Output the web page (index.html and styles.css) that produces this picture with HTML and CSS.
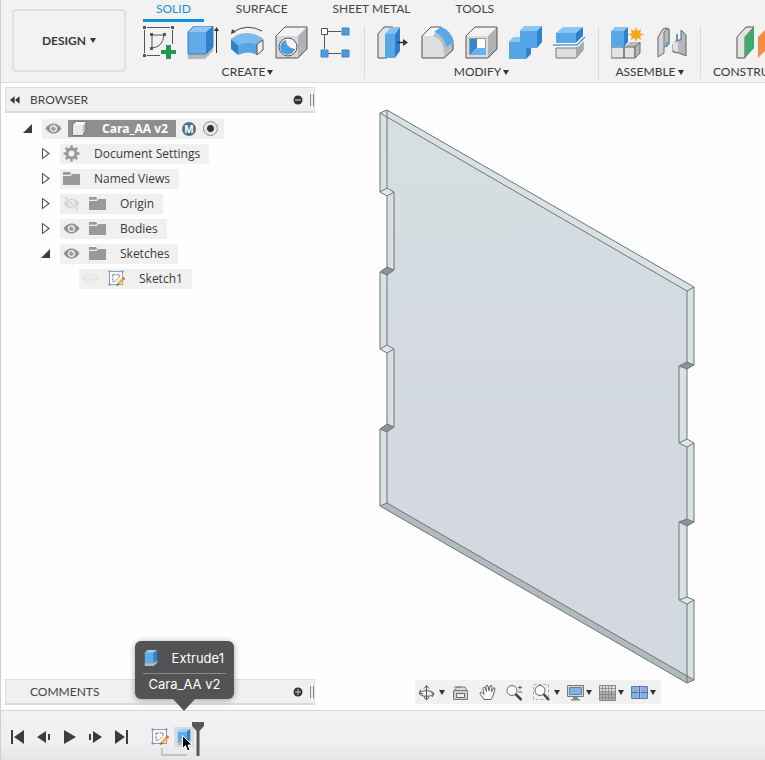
FILE: index.html
```html
<!DOCTYPE html>
<html lang="en">
  <head>
    <meta charset="utf-8">
    <title>Cara_AA v2</title>
    <link rel="stylesheet" href="styles.css">
  </head>
  <body>
    <!-- shared icons -->
    <svg class="defs" width="0" height="0" aria-hidden="true">
      <symbol id="eye" viewBox="0 0 17 17">
        <path d="M0.5 8.5Q4 3.5 8.5 3.5T16.500 8.500Q13 13.500 8.500 13.500T0.500 8.500Z" fill="#919193"/>
        <circle cx="8.500" cy="8.500" r="3.600" fill="#f0f0f1"/>
        <circle cx="8.500" cy="8.500" r="2.200" fill="#919193"/>
        <circle cx="9.200" cy="7.800" r="0.800" fill="#f0f0f1"/>
      </symbol>
      <symbol id="folder" viewBox="0 0 17 17">
        <path d="M0 2h7l1.500 2H17v11H0z" fill="#99999b"/>
        <path d="M0 5.300h7.500l1.500-1.500" fill="none" stroke="#f0f0f1" stroke-width="1.200"/>
      </symbol>
      <symbol id="sketch" viewBox="0 0 18 18">
        <rect x="1.500" y="1.500" width="14" height="14" fill="#f7f9fb" stroke="#8e9ba8"/>
        <path d="M5 5h7.500q-1 6-7.500 7.500z" fill="none" stroke="#7c858e" stroke-dasharray="3 1"/>
        <path d="M0.500 0.500h2v2h-2zM14.500 0.500h2v2h-2zM0.500 14.500h2v2h-2z" fill="#5a9bd4"/>
        <path d="M9.500 16l1-3 5-5 2 2-5 5z" fill="#f5b53c"/>
        <path d="M14.800 8.700l1.400-1.400 2 2-1.400 1.400z" fill="#e2574c"/>
        <path d="M9 17l1-3 1.700 1.800z" fill="#5b5b5b"/>
      </symbol>
      <symbol id="extrude" viewBox="0 0 18 20">
        <path d="M2 16v3h10l4-4v-3z" fill="#b9babc"/>
        <path d="M2 4v12h10V4z" fill="#5dade9"/>
        <path d="M2 4l3-3h11l-4 3z" fill="#9bd0f5"/>
        <path d="M12 4l4-3v12l-4 3z" fill="#2f80c8"/>
      </symbol>
    </svg>

    <header class="toolbar">
      <button class="workspace caret">DESIGN</button>
      <div class="ribbon">
        <nav class="tabs">
          <a class="tab active" href="#solid">SOLID</a>
          <a class="tab" href="#surface">SURFACE</a>
          <a class="tab" href="#sheet-metal">SHEET METAL</a>
          <a class="tab" href="#tools">TOOLS</a>
        </nav>
        <div class="groups">
          <section class="group">
            <div class="tools">
              <button class="tool" aria-label="Create Sketch">
                <svg viewBox="0 0 33 33">
                  <path d="M1.500 4v23M4 1.500h23M29.500 4v14M4 29.500h13" fill="none" stroke="#555"/>
                  <path d="M9 9h12q-1 12-12 13z" fill="none" stroke="#555"/>
                  <path d="M0 0h3v3H0zM28 0h3v3h-3zM0 28h3v3H0zM7 7h3v3H7zM20 7h3v3h-3zM7 21h3v3H7z" fill="#555"/>
                  <path d="M23 19h5v5h5v4h-5v5h-5v-5h-5v-4h5z" fill="#20994f"/>
                </svg>
              </button>
              <button class="tool" aria-label="Extrude">
                <svg viewBox="0 0 33 33">
                  <path d="M1 28v5h17l8-8v-5z" fill="#b6b7b9"/>
                  <path d="M1 6h18v22H1z" fill="#60abe8"/>
                  <path d="M1 6l6-6h19l-7 6z" fill="#8fc6f2"/>
                  <path d="M19 6l7-6v21l-7 7z" fill="#2f81cb"/>
                  <path d="M1 28V6l6-6h19v21l-7 7z" fill="none" stroke="#377fba"/>
                  <path d="M29.500 27V3" stroke="#333"/>
                  <path d="M27 5l2.500-4 2.500 4z" fill="#333"/>
                </svg>
              </button>
              <button class="tool" aria-label="Revolve">
                <svg viewBox="0 0 33 33">
                  <path d="M2 6Q16-3 31 5" fill="none" stroke="#444"/>
                  <path d="M0 8l1-5 4 3z" fill="#444"/>
                  <path d="M0 13l6-4q10-4 20 0l7 4-7 5q-9-4-19 1z" fill="#79bbee"/>
                  <path d="M0 13l7 6v10l-7-6z" fill="#2f81cb"/>
                  <path d="M7 19q9-5 19-1v11q-9-5-19 0z" fill="#58a5e3"/>
                  <path d="M26 18l6-4v10l-6 5z" fill="#eee" stroke="#555"/>
                </svg>
              </button>
              <button class="tool" aria-label="Hole">
                <svg viewBox="0 0 33 33">
                  <path d="M1 10h22v22H1z" fill="#d9d9db"/>
                  <path d="M1 10l9-9h22l-9 9z" fill="#f3f3f4"/>
                  <path d="M23 10l9-9v22l-9 9z" fill="#b1b2b5"/>
                  <path d="M1 32V10l9-9h22v22l-9 9z" fill="none" stroke="#555"/>
                  <circle cx="13" cy="21" r="9" fill="#f4f4f4" stroke="#555"/>
                  <path d="M11 14q0 8 9 9a7.500 7.500 0 1 1-9-9z" fill="#4a9ee0"/>
                </svg>
              </button>
              <button class="tool" aria-label="Pattern">
                <svg viewBox="0 0 33 33">
                  <path d="M5.500 9v14M9 5.500h13M9 27.500h13" stroke="#555"/>
                  <path d="M2.500 2.500h6v6h-6z" fill="#fff" stroke="#555"/>
                  <path d="M23 2h7v7h-7zM2 24h7v7H2zM23 24h7v7h-7z" fill="#4a9ce0" stroke="#3886c8"/>
                </svg>
              </button>
            </div>
            <button class="menu caret">CREATE</button>
          </section>
          <section class="group">
            <div class="tools">
              <button class="tool" aria-label="Press Pull">
                <svg viewBox="0 0 33 33">
                  <path d="M1 32V8l6-7h9l-6 7v24z" fill="#e5e5e6" stroke="#555"/>
                  <path d="M8 8l6-7h9l-5 7z" fill="#83c1f0"/>
                  <path d="M8 8h10v24H8z" fill="#58a7e7"/>
                  <path d="M18 8l5-7v24l-5 7z" fill="#2c7fc9"/>
                  <path d="M20 16.500h8" stroke="#333" stroke-width="1.500"/>
                  <path d="M26 13l5 3.500-5 3.500z" fill="#333"/>
                </svg>
              </button>
              <button class="tool" aria-label="Fillet">
                <svg viewBox="0 0 33 33">
                  <path d="M1 32V10l9-9h10q9 3 12 16v7l-9 8z" fill="#bcbdc0"/>
                  <path d="M1 10h10q11 2 12 16v6H1z" fill="#dededf"/>
                  <path d="M1 10l9-9h9l-7 9z" fill="#f5f5f5"/>
                  <path d="M13 6l7-5q10 3 13 15l-8 5q-2-12-12-15z" fill="#5aa9e7"/>
                  <path d="M20 1H10l-9 9v22h22l9-8v-7" fill="none" stroke="#555"/>
                </svg>
              </button>
              <button class="tool" aria-label="Shell">
                <svg viewBox="0 0 33 33">
                  <path d="M1 10h22v22H1z" fill="#dcdcde"/>
                  <path d="M1 10l9-9h22l-9 9z" fill="#f3f3f4"/>
                  <path d="M23 10l9-9v22l-9 9z" fill="#b1b2b5"/>
                  <path d="M1 32V10l9-9h22v22l-9 9z" fill="none" stroke="#555"/>
                  <path d="M4.500 12.500h16v16h-16z" fill="#fff" stroke="#999"/>
                  <path d="M5 13h7v9l-7 7z" fill="#3286ce"/>
                  <path d="M5 29l7-7h9v7z" fill="#66b2ed"/>
                </svg>
              </button>
              <button class="tool" aria-label="Combine">
                <svg viewBox="0 0 33 33">
                  <path d="M0 33V16l5-5h6V5l5-5h17v16l-5 6h-6v6l-5 5z" fill="#2f82cc"/>
                  <path d="M0 16h11V5h17v17H17v11H0z" fill="#56a5e6"/>
                  <path d="M0 16l5-5h6v5zM11 5l5-5h17l-5 5z" fill="#8bc5f1"/>
                </svg>
              </button>
              <button class="tool" aria-label="Split Body">
                <svg viewBox="0 0 33 33">
                  <path d="M3 7h20v10H3z" fill="#58a7e7"/>
                  <path d="M3 7l7-6h20l-7 6z" fill="#8bc5f1"/>
                  <path d="M23 7l7-6v9l-7 7z" fill="#2f80c9"/>
                  <path d="M3 22h20l7-6v8l-7 8H3z" fill="#dededf" stroke="#777"/>
                  <path d="M23 22v10l7-8v-8z" fill="#aaabae"/>
                  <path d="M1 19h23l8-8" fill="none" stroke="#fff" stroke-width="4"/>
                  <path d="M0 19h24l8-8" fill="none" stroke="#4ba1df" stroke-width="1.500"/>
                </svg>
              </button>
            </div>
            <button class="menu caret">MODIFY</button>
          </section>
          <section class="group">
            <div class="tools">
              <button class="tool" aria-label="New Component">
                <svg viewBox="0 0 33 33">
                  <path d="M14 21l5-5h10v10l-6 6z" fill="#b8b9bb"/>
                  <path d="M0 21h13v11H0zM13 21h11v11H13z" fill="#e2e2e3" stroke="#666"/>
                  <path d="M24 21l5-5v11l-5 5z" fill="#b8b9bb" stroke="#666"/>
                  <path d="M0 5h13v16H0z" fill="#58a7e7"/>
                  <path d="M0 5l4-4h13l-4 4z" fill="#8bc5f1"/>
                  <path d="M13 5l4-4v15l-4 5z" fill="#2f80c9"/>
                  <path d="M25 1l1.500 4 4-2-1.500 4 4 1.500-4 1.500 1.500 4-4-2-1.500 4-1.500-4-4 2 1.500-4-4-1.500 4-1.500-1.500-4 4 2z" fill="#faa61a"/>
                </svg>
              </button>
              <button class="tool" aria-label="Joint">
                <svg viewBox="0 0 33 33">
                  <path d="M3 31V11l5-8q3-2 6 0v15l-5 3v6z" fill="#d2d3d5" stroke="#666"/>
                  <path d="M9 21V6q2-4 5-2v14z" fill="#b8babd" stroke="#777"/>
                  <path d="M12 16v5" stroke="#4aa0e4" stroke-width="2"/>
                  <path d="M31 30V9l-5-5v10h-4l-4 4v8l6 1z" fill="#b5b7ba" stroke="#666"/>
                  <path d="M18 15l5 2v9l-5-2z" fill="#e0e1e3"/>
                  <path d="M22 8v6" stroke="#4aa0e4" stroke-width="2"/>
                </svg>
              </button>
            </div>
            <button class="menu caret">ASSEMBLE</button>
          </section>
          <section class="group">
            <div class="tools">
              <button class="tool" aria-label="Offset Plane">
                <svg viewBox="0 0 33 33">
                  <path d="M1 32V11l9-10h8l-9 10v21z" fill="#e3e3e4" stroke="#555"/>
                  <path d="M9 11l9-10v21L9 32z" fill="#3dab70"/>
                  <path d="M22 11l10-10v21L22 32z" fill="#f28c48"/>
                </svg>
              </button>
            </div>
            <button class="menu caret">CONSTRUCT</button>
          </section>
        </div>
      </div>
    </header>

    <main class="canvas">
      <aside class="side">
        <div class="panel-bar">
          <button class="collapse" aria-label="Collapse">
            <svg viewBox="0 0 11 8"><path d="M5 0v8L0 4zM10.500 0v8L5.500 4z" fill="#333"/></svg>
          </button>
          <h2>BROWSER</h2>
          <button class="dot" aria-label="Hide">
            <svg viewBox="0 0 10 10"><circle cx="5" cy="5" r="4.500" fill="#333"/><path d="M2 5h6" stroke="#aaa" stroke-width="1.500"/></svg>
          </button>
          <span class="grip"></span>
        </div>

        <ul class="tree">
          <li class="root">
            <div class="row">
              <button class="arrow open" aria-label="Collapse Cara_AA v2"></button>
              <div class="item">
                <svg class="icon"><use href="#eye"/></svg>
                <span class="component">
                  <svg class="icon" viewBox="0 0 17 17">
                    <path d="M2 5l3-3h10v9l-3 4H2z" fill="#b9bac7" stroke="#65666f"/>
                    <path d="M2 5h10v10H2z" fill="#e7e7ef"/>
                    <path d="M2 5l3-3h10l-3 3z" fill="#f8f8fb"/>
                  </svg>
                  <span class="name">Cara_AA v2</span>
                </span>
                <span class="badge">M</span>
                <input type="radio" name="active" aria-label="Activate Cara_AA v2" checked>
              </div>
            </div>
            <ul>
              <li>
                <div class="row">
                  <button class="arrow" aria-label="Expand Document Settings"></button>
                  <div class="item">
                    <svg class="icon" viewBox="0 0 17 17">
                      <path d="M8.500 0.500v16M0.500 8.500h16M2.800 2.800l11.400 11.400M14.200 2.800L2.800 14.200" stroke="#98989a" stroke-width="2.600"/>
                      <circle cx="8.500" cy="8.500" r="4.500" fill="#f0f0f1" stroke="#98989a" stroke-width="3"/>
                    </svg>
                    <span class="name">Document Settings</span>
                  </div>
                </div>
              </li>
              <li>
                <div class="row">
                  <button class="arrow" aria-label="Expand Named Views"></button>
                  <div class="item">
                    <svg class="icon"><use href="#folder"/></svg>
                    <span class="name">Named Views</span>
                  </div>
                </div>
              </li>
              <li>
                <div class="row">
                  <button class="arrow" aria-label="Expand Origin"></button>
                  <div class="item">
                    <svg class="icon off" viewBox="0 0 17 17">
                      <use href="#eye"/>
                      <path d="M2 2l13 13" stroke="#f0f0f1" stroke-width="3"/>
                      <path d="M2 2l13 13" stroke="#919193" stroke-width="1.500"/>
                    </svg>
                    <svg class="icon"><use href="#folder"/></svg>
                    <span class="name">Origin</span>
                  </div>
                </div>
              </li>
              <li>
                <div class="row">
                  <button class="arrow" aria-label="Expand Bodies"></button>
                  <div class="item">
                    <svg class="icon"><use href="#eye"/></svg>
                    <svg class="icon"><use href="#folder"/></svg>
                    <span class="name">Bodies</span>
                  </div>
                </div>
              </li>
              <li>
                <div class="row">
                  <button class="arrow open" aria-label="Collapse Sketches"></button>
                  <div class="item">
                    <svg class="icon"><use href="#eye"/></svg>
                    <svg class="icon"><use href="#folder"/></svg>
                    <span class="name">Sketches</span>
                  </div>
                </div>
                <ul>
                  <li>
                    <div class="row">
                      <div class="item">
                        <svg class="icon faint"><use href="#eye"/></svg>
                        <svg class="icon"><use href="#sketch"/></svg>
                        <span class="name">Sketch1</span>
                      </div>
                    </div>
                  </li>
                </ul>
              </li>
            </ul>
          </li>
        </ul>

        <div class="panel-bar comments">
          <h2>COMMENTS</h2>
          <button class="dot" aria-label="Add comment">
            <svg viewBox="0 0 10 10"><circle cx="5" cy="5" r="4.500" fill="#333"/><path d="M2 5h6M5 2v6" stroke="#ccc"/></svg>
          </button>
          <span class="grip"></span>
        </div>
      </aside>

      <div class="viewport">
        <svg class="model" viewBox="315 83 450 627" role="img" aria-label="Extruded plate">
          <defs>
            <linearGradient id="glass" x1="0" y1="0" x2="0" y2="1">
              <stop offset="0" stop-color="#d6dfe1"/>
              <stop offset="0.500" stop-color="#d3d9e0"/>
              <stop offset="1" stop-color="#d3dade"/>
            </linearGradient>
          </defs>
          <!-- plate silhouette -->
          <path d="M380 113L387 110L694 287V365L687 369V439L694 443V522L687 526V597L694 600V680L687 683L380 506V429L387 425V353L380 349V272L387 268V196L380 192Z" fill="url(#glass)"/>
          <!-- thickness -->
          <g fill="#dae1e3">
            <path d="M380 113L387 110L694 287L687 291Z"/>
            <path d="M380 113L387 117V195L380 192ZM387 196L394 192V270L387 268ZM380 272L387 275V352L380 349ZM387 353L394 349V427L387 425ZM380 429L387 432V503L380 506Z"/>
            <path d="M687 291L694 287V365L687 369ZM679 366L687 369V440L679 443ZM687 447L694 443V522L687 526ZM679 522L687 526V597L679 600ZM687 604L694 600V680L687 683Z"/>
          </g>
          <path d="M380 506L387 503L694 680L687 683Z" fill="#b3b9bc"/>
          <g fill="#8b9397">
            <path d="M380 272L387 267L394 270L387 275ZM380 429L387 424L394 427L387 432Z"/>
            <path d="M679 366L687 362L694 365L687 369ZM679 522L687 519L694 522L687 526Z"/>
          </g>
          <g fill="#dfe8ea">
            <path d="M380 192L387 188L394 192L387 196ZM380 349L387 345L394 349L387 353Z"/>
            <path d="M679 443L687 439L694 443L687 447ZM679 600L687 597L694 600L687 604Z"/>
          </g>
          <g fill="none" stroke="#6b767b" stroke-linejoin="round">
            <path d="M380 113L387 110L694 287L687 291ZM380 506L387 503L694 680L687 683Z"/>
            <path d="M380 113V192L387 188L394 192V270L387 267L380 272V349L387 345L394 349V427L387 424L380 429V506"/>
            <path d="M387 110V188M380 192L387 196L394 192M387 196V267M380 272L387 275L394 270M387 275V345M380 349L387 353L394 349M387 353V424M380 429L387 432L394 427M387 432V503"/>
            <path d="M694 287V365L687 369L679 366V443L687 447L694 443V522L687 526L679 522V600L687 604L694 600V680"/>
            <path d="M687 291V362M679 366L687 362L694 365M687 369V439M679 443L687 439L694 443M687 447V519M679 522L687 519L694 522M687 526V597M679 600L687 597L694 600M687 604V683"/>
          </g>
        </svg>

        <div class="navbar">
          <div class="nav-group">
            <button class="caret" aria-label="Orbit">
              <svg viewBox="0 0 17 17">
                <g fill="none" stroke="#555"><ellipse cx="8.500" cy="9.500" rx="7" ry="2.800"/><path d="M8.500 2v13M6 4.500l2.500-3 2.500 3M6 13l2.500 3 2.500-3"/><path d="M3 5.500L1 9l4 1M14 13l2-3.500-3-1"/></g>
              </svg>
            </button>
            <button class="plain" aria-label="Look At">
              <svg viewBox="0 0 17 17">
                <path d="M2 7l3-4h8l2 4" fill="#ddd" stroke="#777"/>
                <path d="M1.500 6.500h14v9h-14z" fill="#cfcfd1" stroke="#777"/>
                <path d="M4.500 9.500h8v4h-8z" fill="#eee" stroke="#666"/>
                <path d="M2 3h7" stroke="#777"/>
              </svg>
            </button>
            <button class="plain" aria-label="Pan">
              <svg viewBox="0 0 17 17">
                <path d="M5 15.500L1 9.500q0-2 2-1l2 2-1-6q0-2 2-1l1.500 4L7 2q1-2 2 0l1 5 1-5q1-1.500 2 0l-.500 6 2-4q1.500-1 1.500 1l-2 7-2 3.500z" fill="#fafafa" stroke="#666"/>
              </svg>
            </button>
            <button class="plain" aria-label="Zoom">
              <svg viewBox="0 0 17 17">
                <circle cx="6" cy="6.500" r="5" fill="#fafafa" stroke="#666"/>
                <path d="M9.500 10l6 6" stroke="#444" stroke-width="2.500"/>
                <path d="M12 3.500h4M14 1.500v4M12 8h4" stroke="#666"/>
              </svg>
            </button>
            <button class="caret" aria-label="Fit">
              <svg viewBox="0 0 17 17">
                <path d="M0.500 0.500h15v15h-15z" fill="none" stroke="#aaa" stroke-dasharray="3 2"/>
                <circle cx="7" cy="6.500" r="5" fill="#fafafa" stroke="#666"/>
                <path d="M10.500 10l5.500 6" stroke="#444" stroke-width="2.500"/>
              </svg>
            </button>
          </div>
          <div class="nav-group display">
            <button class="caret" aria-label="Display Settings">
              <svg viewBox="0 0 17 17">
                <path d="M0.500 1.500h16v11h-16z" fill="#d4d5d7" stroke="#77797d"/>
                <path d="M2.500 3.500h12v7h-12z" fill="#85b1e4" stroke="#5f87b5"/>
                <path d="M6 13h5v2h2v1.500H4V15h2z" fill="#85878b"/>
              </svg>
            </button>
            <button class="caret" aria-label="Grid and Snaps">
              <svg viewBox="0 0 17 17">
                <path d="M0.500 1.500h16v15h-16z" fill="#dcdcdd" stroke="#888"/>
                <path d="M1 8h15v8H1z" fill="#adaeb0"/>
                <path d="M3.500 1v15M6.500 1v15M9.500 1v15M12.500 1v15M0 4.500h16M0 7.500h16M0 10.500h16M0 13.500h16" stroke="#808184" stroke-width="0.700"/>
              </svg>
            </button>
            <button class="caret" aria-label="Viewports">
              <svg viewBox="0 0 17 17">
                <path d="M0.500 2.500h16v12h-16z" fill="#86afdd" stroke="#5c7ea6"/>
                <path d="M8.500 2v13M1 8.500h15" stroke="#4c6c91"/>
                <path d="M7.300 3v11M9.700 3v11" stroke="#b7d2ef" stroke-width="0.600"/>
              </svg>
            </button>
          </div>
        </div>
      </div>
    </main>

    <footer class="timeline">
      <div class="playback">
        <button aria-label="Go to start"><svg viewBox="0 0 14 14"><path d="M0 0h2v14H0zM13 0v14L3 7z" fill="#3c3c3c"/></svg></button>
        <button aria-label="Step back"><svg viewBox="0 0 14 14"><path d="M9 1v12L0 7zM11 4h2v6h-2z" fill="#3c3c3c"/></svg></button>
        <button aria-label="Play"><svg viewBox="0 0 14 14"><path d="M1 0v14l12-7z" fill="#3c3c3c"/></svg></button>
        <button aria-label="Step forward"><svg viewBox="0 0 14 14"><path d="M4 1v12l9-6zM0 4h2v6H0z" fill="#3c3c3c"/></svg></button>
        <button aria-label="Go to end"><svg viewBox="0 0 14 14"><path d="M11 0h2v14h-2zM0 0v14l10-7z" fill="#3c3c3c"/></svg></button>
      </div>
      <div class="features">
        <button class="feature" aria-label="Sketch1"><svg><use href="#sketch"/></svg></button>
        <button class="feature hover" aria-label="Extrude1"><svg><use href="#extrude"/></svg></button>
        <span class="link"></span>
        <svg class="marker" viewBox="0 0 14 34"><path d="M1 0h12v4l-4.500 5V34h-3V9L1 4z" fill="#58585a"/></svg>
        <svg class="cursor" viewBox="0 0 11 17"><path d="M0.500 0.500v13l3-3 2 5.500 2.500-1-2-5h4z" fill="#000" stroke="#fff"/></svg>
        <div class="tooltip" role="tooltip">
          <div class="tip-title"><svg><use href="#extrude"/></svg>Extrude1</div>
          <div class="tip-doc">Cara_AA v2</div>
        </div>
      </div>
    </footer>
  </body>
</html>
```
FILE: styles.css
```css
* {
  box-sizing: border-box;
}

body {
  display: flex;
  flex-direction: column;
  min-height: 100vh;
  margin: 0;
  border-left: 1px solid #cfcfd0;
  overflow-x: hidden;
  background: #fefefe;
  color: #3a3a3a;
  font-family: Lato, sans-serif;
  font-size: 12px;
  line-height: 16px;
}

button {
  margin: 0;
  padding: 0;
  border: 0;
  background: none;
  color: inherit;
  font: inherit;
}

svg {
  display: block;
}

.defs {
  position: absolute;
}

ul {
  margin: 0;
  padding: 0;
  list-style: none;
}

.caret {
  display: flex;
  align-items: center;
}

.caret::after {
  content: "";
  margin-left: 4px;
  border: 3px solid transparent;
  border-top: 5px solid #333;
  border-bottom: 0;
}

.menu.caret::after {
  margin-left: 2px;
}

/* toolbar */

.toolbar {
  display: flex;
  height: 83px;
  border-bottom: 1px solid #dcdcdd;
  background: #f2f2f2;
  overflow: hidden;
}

.workspace {
  flex: none;
  justify-content: center;
  width: 114px;
  height: 63px;
  margin: 9px 17px 0 11px;
  border: 2px solid #e0e0e1;
  border-radius: 4px;
  font-weight: bold;
}

.ribbon {
  flex: none;
}

.tabs {
  display: flex;
  gap: 19px;
}

.tab {
  height: 22px;
  padding: 1px 13px 0;
  color: #444;
  text-decoration: none;
}

.tab.active {
  border-bottom: 3px solid #1190dc;
  color: #1190dc;
}

.groups {
  display: flex;
  margin-top: 4px;
}

.group {
  display: flex;
  flex-direction: column;
  align-items: center;
  gap: 5px;
  height: 53px;
  padding: 0 12px;
  border-left: 1px solid #dadadc;
}

.group:first-child {
  padding-left: 0;
  border-left: 0;
}

.tools {
  display: flex;
  gap: 11px;
}

.tool svg {
  width: 33px;
  height: 33px;
}

/* browser */

.canvas {
  display: flex;
  flex: 1;
}

.side {
  display: flex;
  flex: none;
  flex-direction: column;
  width: 314px;
  padding: 4px 0 5px 4px;
}

.panel-bar {
  display: flex;
  align-items: center;
  height: 26px;
  padding: 0 0 0 4px;
  border: 1px solid #dedee0;
  border-bottom: 2px solid #dadadb;
  background: #f0f0f1;
}

.panel-bar h2 {
  flex: 1;
  margin: 0;
  color: #444;
  font-size: 12px;
  font-weight: normal;
}

.collapse svg {
  width: 10px;
  height: 8px;
  margin-right: 10px;
}

.dot svg {
  width: 10px;
  height: 10px;
}

.grip {
  width: 4px;
  height: 12px;
  margin-left: 7px;
  border: 1px solid #888;
  border-width: 0 1px;
}

.comments {
  margin-top: auto;
  padding-left: 24px;
}

.tree {
  padding: 3px 0 0 17px;
  font-family: "Open Sans", sans-serif;
}

.tree ul {
  padding-left: 18px;
}

.row {
  display: flex;
  align-items: center;
  height: 25px;
}

.arrow {
  display: flex;
  align-items: center;
  width: 20px;
  height: 16px;
}

.arrow::before {
  content: "";
  width: 8px;
  height: 12px;
  margin-left: 2px;
  background: #555;
  clip-path: polygon(0 0, 100% 50%, 0 100%, 0 0, 1px 2px, 1px 10px, 6px 6px, 1px 2px);
}

.arrow.open::before {
  width: 9px;
  height: 9px;
  margin-left: 1px;
  background: #3c3c3c;
  clip-path: polygon(100% 0, 100% 100%, 0 100%);
}

.item {
  display: flex;
  align-items: center;
  gap: 9px;
  height: 20px;
  padding: 0 9px 0 3px;
  background: #f0f0f1;
}

.icon {
  width: 17px;
  height: 17px;
}

.icon.off {
  opacity: 0.3;
}

.icon.faint {
  opacity: 0.1;
}

.name {
  margin-left: 5px;
}

.root > .row .item {
  gap: 6px;
  padding-right: 6px;
}

.component {
  display: flex;
  align-items: center;
  gap: 9px;
  height: 17px;
  padding: 0 8px 0 3px;
  background: #8f8f91;
  color: #fff;
  font-weight: bold;
}

.badge {
  width: 14px;
  height: 14px;
  border-radius: 50%;
  background: #4d7388;
  color: #fff;
  font-size: 10px;
  font-weight: bold;
  line-height: 14px;
  text-align: center;
}

.item input {
  width: 15px;
  height: 15px;
  margin: 0 0 0 1px;
  border: 1px solid #8a8a90;
  border-radius: 50%;
  appearance: none;
  background: radial-gradient(circle, #333 3px, #e6e6ee 4px);
}

.tree ul ul {
  padding-left: 39px;
}

/* viewport */

.viewport {
  position: relative;
  flex: 1;
}

.model {
  position: absolute;
  width: 100%;
  height: 100%;
}

.navbar {
  position: absolute;
  bottom: 6px;
  left: 100px;
  display: flex;
  gap: 7px;
  height: 24px;
  padding: 0 5px 0 3px;
  background: #f1f1f2;
}

.nav-group {
  display: flex;
  gap: 7px;
}

.nav-group svg {
  width: 17px;
  height: 17px;
}

.plain {
  padding-right: 3px;
}

.display .caret::after {
  margin-left: 2px;
}

/* timeline */

.timeline {
  display: flex;
  align-items: center;
  height: 50px;
  padding: 2px 0 0 10px;
  border-top: 1px solid #d6d6d8;
  background: linear-gradient(#f2f2f4, #f0f0f2 60%, #e6e6e6);
}

.playback {
  display: flex;
  gap: 12px;
}

.playback svg {
  width: 14px;
  height: 14px;
}

.features {
  position: relative;
  display: flex;
  gap: 4px;
  margin-left: 21px;
}

.feature {
  padding: 1px;
}

.feature svg {
  width: 18px;
  height: 18px;
}

.feature.hover {
  background: #dcdcde;
}

.link {
  position: absolute;
  top: 21px;
  left: 11px;
  width: 26px;
  height: 8px;
  border: 2px solid #c3c3c5;
  border-width: 0 0 2px 2px;
}

.marker {
  position: absolute;
  top: -5px;
  left: 41px;
  width: 14px;
  height: 34px;
}

.cursor {
  position: absolute;
  top: 8px;
  left: 32px;
  width: 11px;
  height: 17px;
}

.tooltip {
  position: absolute;
  bottom: 48px;
  left: -15px;
  width: 99px;
  padding: 9px 8px 7px;
  border-radius: 6px;
  background: #535355;
  box-shadow: 0 1px 6px rgba(0, 0, 0, 0.35);
  color: #fff;
  font-family: Inter, sans-serif;
  font-size: 13px;
}

.tooltip::after {
  content: "";
  position: absolute;
  top: 100%;
  left: 38px;
  border: 11px solid transparent;
  border-top: 12px solid #535355;
  border-bottom: 0;
}

.tip-title {
  display: flex;
  justify-content: space-between;
  align-items: center;
  height: 24px;
  padding: 0 2px 6px 0;
  border-bottom: 1px solid #88888a;
}

.tip-title svg {
  width: 16px;
  height: 18px;
}

.tip-doc {
  padding-top: 2px;
  text-align: center;
}
```
